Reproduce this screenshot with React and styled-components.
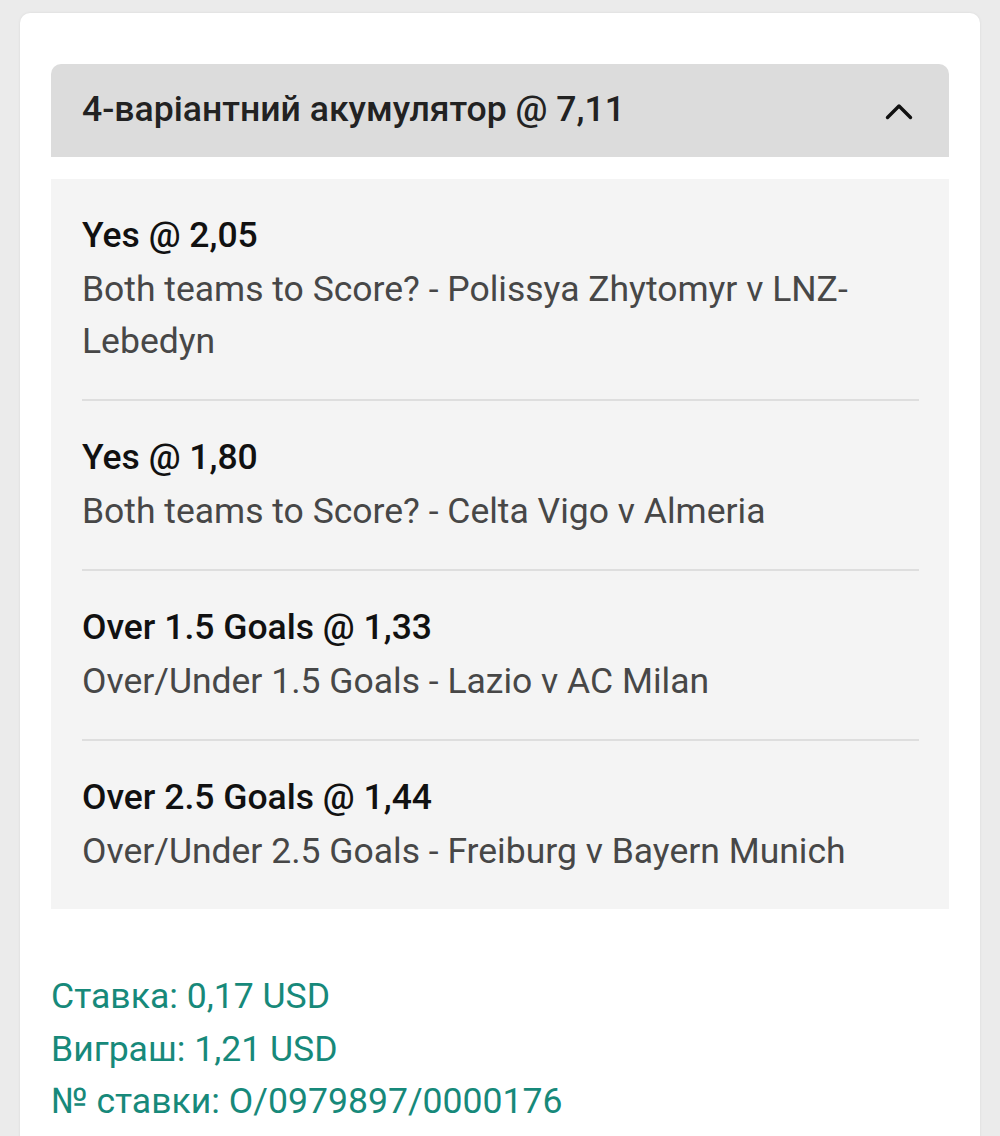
import React from "react";
import styled, { createGlobalStyle } from "styled-components";

const Global = createGlobalStyle`
  html, body { margin: 0; padding: 0; background: #ebebeb; }
  body { font-family: Roboto, "Noto Sans", sans-serif; }
`;

const Page = styled.div`
  padding: 13px 20px 0 20px;
  height: 1136px;
  box-sizing: border-box;
  overflow: hidden;
`;

const Card = styled.div`
  background: #ffffff;
  border-radius: 10px 10px 0 0;
  box-shadow: 0 0 3px rgba(0, 0, 0, 0.08);
  padding: 51px 31px 40px 31px;
  min-height: 1200px;
  box-sizing: border-box;
`;

const Header = styled.div`
  display: flex;
  align-items: center;
  justify-content: space-between;
  height: 93px;
  background: #dcdcdc;
  border-radius: 10px 10px 0 0;
  padding: 0 36px 0 31px;
`;

const HeaderTitle = styled.div`
  font-size: 35.6px;
  font-weight: 500;
  color: #222222;
  padding-bottom: 3px;
`;

const List = styled.div`
  margin-top: 22px;
  background: #f4f4f4;
  padding: 0 30px 0 31px;
`;

const Item = styled.div`
  padding: 29px 0 32px 0;
  border-bottom: ${(p) => (p.$last ? "none" : "2px solid #dedede")};
`;

const Title = styled.div`
  font-size: 35.5px;
  line-height: 55px;
  font-weight: 500;
  color: #111111;
`;

const Sub = styled.div`
  font-size: 35.5px;
  line-height: 52px;
  color: #474747;
`;

const Summary = styled.div`
  margin-top: 61px;
  color: #17897a;
  font-size: 35.6px;
  line-height: 52.5px;
`;

const Chevron = () => (
  <svg width="28" height="18" viewBox="0 0 28 18" fill="none">
    <path d="M2.5 15.5 L14 4 L25.5 15.5" stroke="#111" strokeWidth="3.4" strokeLinecap="round" strokeLinejoin="round" />
  </svg>
);

const items = [
  { t: "Yes @ 2,05", s: "Both teams to Score? - Polissya Zhytomyr v LNZ-Lebedyn" },
  { t: "Yes @ 1,80", s: "Both teams to Score? - Celta Vigo v Almeria" },
  { t: "Over 1.5 Goals @ 1,33", s: "Over/Under 1.5 Goals - Lazio v AC Milan" },
  { t: "Over 2.5 Goals @ 1,44", s: "Over/Under 2.5 Goals - Freiburg v Bayern Munich" },
];

export default function App() {
  return (
    <>
      <Global />
      <Page>
        <Card>
          <Header>
            <HeaderTitle>4-варіантний акумулятор @ 7,11</HeaderTitle>
            <Chevron />
          </Header>
          <List>
            {items.map((it, i) => (
              <Item key={i} $last={i === items.length - 1}>
                <Title>{it.t}</Title>
                <Sub>{it.s}</Sub>
              </Item>
            ))}
          </List>
          <Summary>
            <div>Ставка: 0,17 USD</div>
            <div>Виграш: 1,21 USD</div>
            <div>№ ставки: O/0979897/0000176</div>
          </Summary>
        </Card>
      </Page>
    </>
  );
}
